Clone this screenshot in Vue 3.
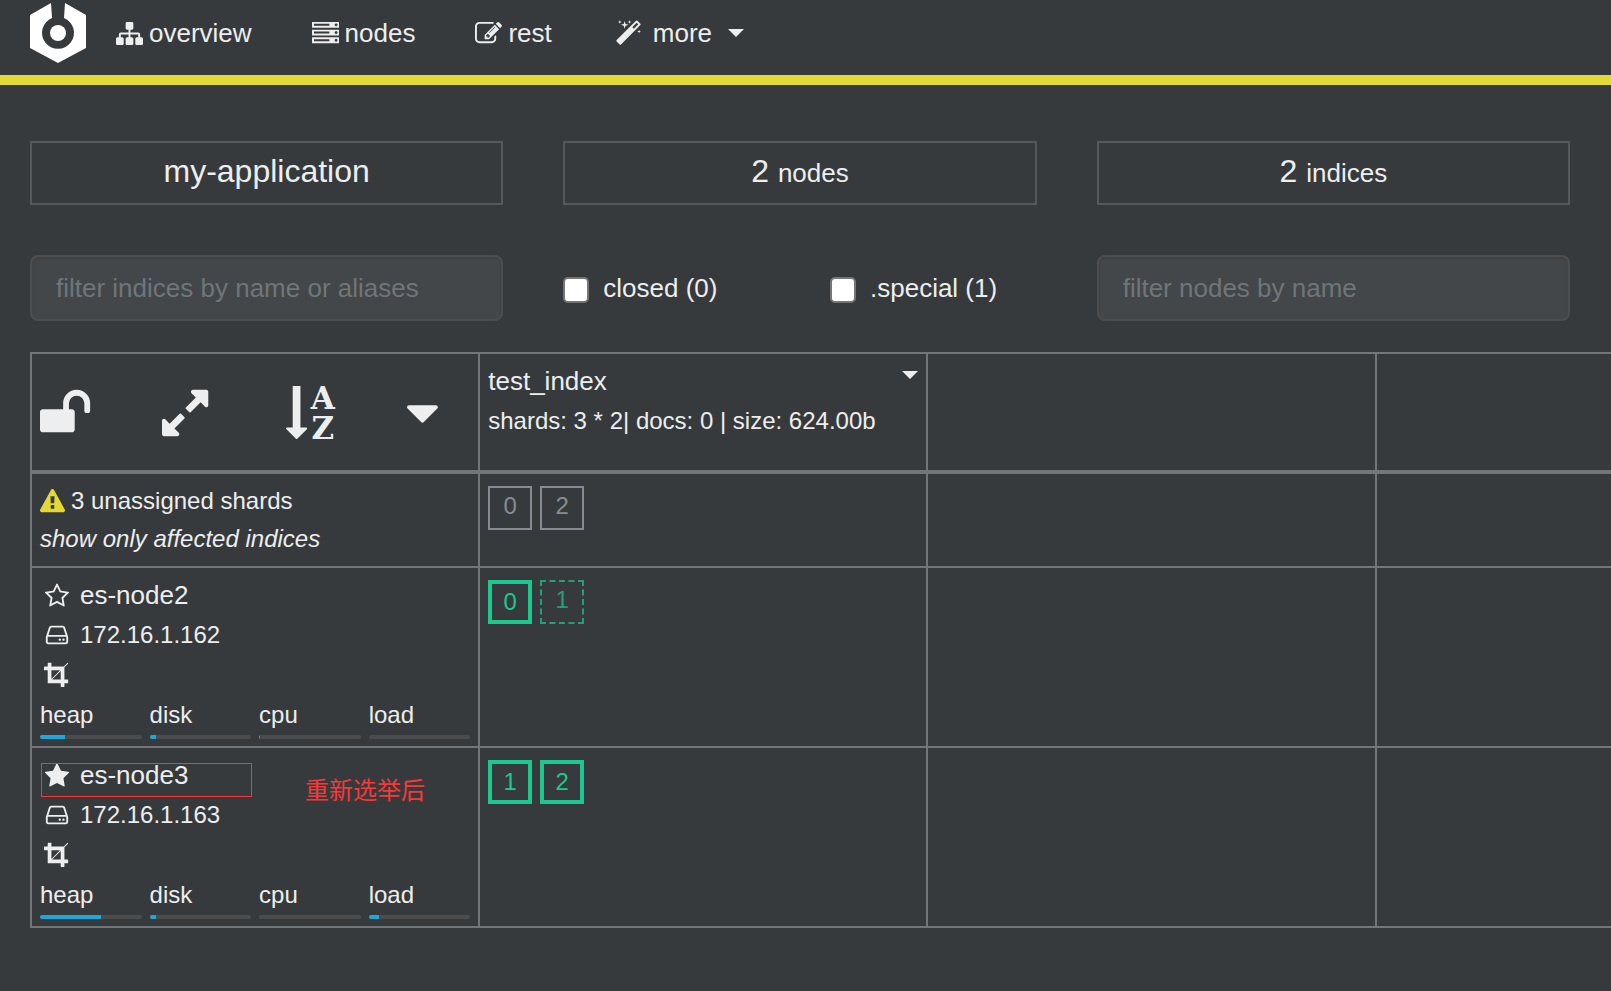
<script setup>
import { ref } from 'vue'

const icons = {
  sitemap: 'M1792 1248v320q0 40-28 68t-68 28h-320q-40 0-68-28t-28-68v-320q0-40 28-68t68-28h96v-192h-512v192h96q40 0 68 28t28 68v320q0 40-28 68t-68 28h-320q-40 0-68-28t-28-68v-320q0-40 28-68t68-28h96v-192h-512v192h96q40 0 68 28t28 68v320q0 40-28 68t-68 28h-320q-40 0-68-28t-28-68v-320q0-40 28-68t68-28h96v-192q0-52 38-90t90-38h512v-192h-96q-40 0-68-28t-28-68v-320q0-40 28-68t68-28h320q40 0 68 28t28 68v320q0 40-28 68t-68 28h-96v192h512q52 0 90 38t38 90v192h96q40 0 68 28t28 68z',
  server: 'M128 1408h1024v-128h-1024v128zm0-512h1024v-128h-1024v128zm1568 448q0-40-28-68t-68-28-68 28-28 68 28 68 68 28 68-28 28-68zm-1568-960h1024v-128h-1024v128zm1568 448q0-40-28-68t-68-28-68 28-28 68 28 68 68 28 68-28 28-68zm0-512q0-40-28-68t-68-28-68 28-28 68 28 68 68 28 68-28 28-68zm96 832v384h-1792v-384h1792zm0-512v384h-1792v-384h1792zm0-512v384h-1792v-384h1792z',
  edit: 'M888 1184l116-116-152-152-116 116v56h96v96h56zm440-720q-16-16-33 1l-350 350q-17 17-1 33t33-1l350-350q17-17 1-33zm80 594v190q0 119-84.5 203.5t-203.5 84.5h-832q-119 0-203.5-84.5t-84.5-203.5v-832q0-119 84.5-203.5t203.5-84.5h832q63 0 117 25 15 7 18 23 3 17-9 29l-49 49q-14 14-32 8-23-6-45-6h-832q-66 0-113 47t-47 113v832q0 66 47 113t113 47h832q66 0 113-47t47-113v-126q0-13 9-22l64-64q15-15 35-7t20 29zm-96-738l288 288-672 672h-288v-288zm444 132l-92 92-288-288 92-92q28-28 68-28t68 28l152 152q28 28 28 68t-28 68z',
  magic: 'M1254 581l293-293-107-107-293 293zm447-293q0 27-18 45l-1286 1286q-18 18-45 18t-45-18l-198-198q-18-18-18-45t18-45l1286-1286q18-18 45-18t45 18l198 198q18 18 18 45zm-1351-190l98 30-98 30-30 98-30-98-98-30 98-30 30-98zm350 162l196 60-196 60-60 196-60-196-196-60 196-60 60-196zm930 478l98 30-98 30-30 98-30-98-98-30 98-30 30-98zm-640-640l98 30-98 30-30 98-30-98-98-30 98-30 30-98z',
  unlock: 'M1728 576v256q0 26-19 45t-45 19h-64q-26 0-45-19t-19-45v-256q0-106-75-181t-181-75-181 75-75 181v192h96q40 0 68 28t28 68v576q0 40-28 68t-68 28h-960q-40 0-68-28t-28-68v-576q0-40 28-68t68-28h672v-192q0-185 131.5-316.5t316.5-131.5 316.5 131.5 131.5 316.5z',
  expand: 'M883 1056q0 13-10 23l-332 332 144 144q19 19 19 45t-19 45-45 19h-448q-26 0-45-19t-19-45v-448q0-26 19-45t45-19 45 19l144 144 332-332q10-10 23-10t23 10l114 114q10 10 10 23zm781-864v448q0 26-19 45t-45 19-45-19l-144-144-332 332q-10 10-23 10t-23-10l-114-114q-10-10-10-23t10-23l332-332-144-144q-19-19-19-45t19-45 45-19h448q26 0 45 19t19 45z',
  sortArrow: 'M736 1408q0 12-10 24l-319 319q-10 9-23 9-12 0-23-9l-320-320q-15-16-7-35 8-20 30-20h192v-1376q0-14 9-23t23-9h192q14 0 23 9t9 23v1376h192q14 0 23 9t9 23z',
  caret: 'M1408 704q0 26-19 45l-448 448q-19 19-45 19t-45-19l-448-448q-19-19-19-45t19-45 45-19h896q26 0 45 19t19 45z',
  warning: 'M1024 1375v-190q0-14-9.5-23.5t-22.5-9.5h-192q-13 0-22.5 9.5t-9.5 23.5v190q0 14 9.5 23.5t22.5 9.5h192q13 0 22.5-9.5t9.5-23.5zm-2-374l18-459q0-12-10-19-13-11-24-11h-220q-11 0-24 11-10 7-10 21l17 457q0 10 10 16.5t24 6.5h185q14 0 23.5-6.5t10.5-16.5zm-14-934l768 1408q35 63-2 126-17 29-46.5 46t-63.5 17h-1536q-34 0-63.5-17t-46.5-46q-37-63-2-126l768-1408q17-31 47-49t65-18 65 18 47 49z',
  star: 'M1728 647q0 22-26 48l-363 354 86 500q1 7 1 20 0 21-10.5 35.5t-30.5 14.5q-19 0-40-12l-449-236-449 236q-22 12-40 12-21 0-31.5-14.5t-10.5-35.5q0-6 2-20l86-500-364-354q-25-27-25-48 0-37 56-46l502-73 225-455q19-41 49-41t49 41l225 455 502 73q56 9 56 46z',
  starOutline: 'M1201 1004l306-297-422-62-189-382-189 382-422 62 306 297-73 421 378-199 377 199zm527-357q0 22-26 48l-363 354 86 500q1 7 1 20 0 50-41 50-19 0-40-12l-449-236-449 236q-22 12-40 12-21 0-31.5-14.5t-10.5-35.5q0-6 2-20l86-500-364-354q-25-27-25-48 0-37 56-46l502-73 225-455q19-41 49-41t49 41l225 455 502 73q56 9 56 46z',
  disk: 'M1168 1216q0 33-23.5 56.5t-56.5 23.5-56.5-23.5-23.5-56.5 23.5-56.5 56.5-23.5 56.5 23.5 23.5 56.5zm256 0q0 33-23.5 56.5t-56.5 23.5-56.5-23.5-23.5-56.5 23.5-56.5 56.5-23.5 56.5 23.5 23.5 56.5zm112 160v-320q0-13-9.5-22.5t-22.5-9.5h-1216q-13 0-22.5 9.5t-9.5 22.5v320q0 13 9.5 22.5t22.5 9.5h1216q13 0 22.5-9.5t9.5-22.5zm-1230-480h1180l-157-482q-4-13-16-21.5t-26-8.5h-782q-14 0-26 8.5t-16 21.5zm1358 160v320q0 66-47 113t-113 47h-1216q-66 0-113-47t-47-113v-320q0-25 16-75l197-606q17-53 63-86t101-33h782q55 0 101 33t63 86l197 606q16 50 16 75z',
  crop: 'M557 1280h595v-595zm-45-45l595-595h-595v595zm1152 77v192q0 14-9 23t-23 9h-224v224q0 14-9 23t-23 9h-192q-14 0-23-9t-9-23v-224h-864q-14 0-23-9t-9-23v-864h-224q-14 0-23-9t-9-23v-192q0-14 9-23t23-9h224v-224q0-14 9-23t23-9h192q14 0 23 9t9 23v224h851l246-247q10-9 23-9t23 9q9 10 9 23t-9 23l-247 246v851h224q14 0 23 9t9 23z'
}

const links = [
  { label: 'overview', icon: icons.sitemap },
  { label: 'nodes', icon: icons.server },
  { label: 'rest', icon: icons.edit }
]

const indexFilter = ref('')
const nodeFilter = ref('')
const showClosed = ref(false)
const showSpecial = ref(false)

const nodes = [
  {
    name: 'es-node2',
    ip: '172.16.1.162',
    master: false,
    stats: [['heap', 25], ['disk', 6], ['cpu', 1], ['load', 0]],
    shards: [{ id: 0, kind: 'primary' }, { id: 1, kind: 'replica' }]
  },
  {
    name: 'es-node3',
    ip: '172.16.1.163',
    master: true,
    note: '重新选举后',
    stats: [['heap', 60], ['disk', 6], ['cpu', 0], ['load', 10]],
    shards: [{ id: 1, kind: 'primary' }, { id: 2, kind: 'primary' }]
  }
]
</script>

<template>
  <div class="page">
    <header class="navbar">
      <a class="logo" href="#" aria-label="cerebro">
        <svg viewBox="0 0 56 60">
          <path class="logo-body" d="M21 0L0 12V45L28 60L56 45V12L35 0L34 15A16 16 0 1 1 22 15Z" />
          <circle class="logo-body" cx="28" cy="30" r="8" />
        </svg>
      </a>
      <nav class="links">
        <a v-for="l in links" :key="l.label" href="#" class="nav-item">
          <svg class="nav-icon" viewBox="0 0 1792 1792"><path :d="l.icon" /></svg>
          <span>{{ l.label }}</span>
        </a>
        <button type="button" class="nav-item more">
          <span class="icon-slot"><svg class="nav-icon" viewBox="0 0 1792 1792"><path :d="icons.magic" /></svg></span>
          <span>more</span>
          <span class="caret more-caret"></span>
        </button>
      </nav>
    </header>

    <main>
      <section class="thirds summary">
        <div class="stat">my-application</div>
        <div class="stat">2 <small>nodes</small></div>
        <div class="stat">2 <small>indices</small></div>
      </section>

      <section class="thirds filters">
        <input v-model="indexFilter" class="field" type="text" aria-label="filter indices" placeholder="filter indices by name or aliases">
        <div class="checks">
          <label><input v-model="showClosed" type="checkbox"><span>closed (0)</span></label>
          <label><input v-model="showSpecial" type="checkbox"><span>.special (1)</span></label>
        </div>
        <input v-model="nodeFilter" class="field" type="text" aria-label="filter nodes" placeholder="filter nodes by name">
      </section>

      <table class="shard-table">
        <colgroup>
          <col class="col"><col class="col"><col class="col"><col>
        </colgroup>
        <thead>
          <tr>
            <th>
              <div class="tools">
                <button type="button" aria-label="lock shard allocation">
                  <svg class="tool-icon" viewBox="64 0 1792 1792"><path :d="icons.unlock" /></svg>
                </button>
                <button type="button" aria-label="expand view">
                  <svg class="tool-icon" viewBox="128 0 1792 1792"><path :d="icons.expand" /></svg>
                </button>
                <button type="button" class="sort" aria-label="sort by name">
                  <svg class="sort-arrow" viewBox="0 0 763 1792"><path :d="icons.sortArrow" /></svg>
                  <span class="sort-letters">A Z</span>
                </button>
                <button type="button" aria-label="more actions">
                  <svg class="tool-icon" viewBox="384 0 1792 1792"><path :d="icons.caret" /></svg>
                </button>
              </div>
            </th>
            <th>
              <div class="index-head">
                <div class="lines">
                  <a href="#" class="name">test_index</a>
                  <span>shards: 3 * 2| docs: 0 | size: 624.00b</span>
                </div>
                <button type="button" class="index-menu" aria-label="index actions"><span class="caret"></span></button>
              </div>
            </th>
            <th></th>
            <th></th>
          </tr>
        </thead>
        <tbody>
          <tr>
            <td class="unassigned">
              <div class="lines">
                <span class="alert"><svg class="alert-icon" viewBox="0 0 1792 1792"><path :d="icons.warning" /></svg>3 unassigned shards</span>
                <a href="#" class="affected">show only affected indices</a>
              </div>
            </td>
            <td>
              <div class="shards">
                <span class="shard">0</span>
                <span class="shard">2</span>
              </div>
            </td>
            <td></td>
            <td></td>
          </tr>
          <tr v-for="n in nodes" :key="n.name">
            <td class="node">
              <div class="lines">
                <div class="node-line name">
                  <span class="icon-slot"><svg class="node-icon" viewBox="0 0 1792 1792"><path :d="n.master ? icons.star : icons.starOutline" /></svg></span>
                  <a href="#">{{ n.name }}</a>
                </div>
                <div class="node-line">
                  <span class="icon-slot"><svg class="node-icon" viewBox="0 0 1792 1792"><path :d="icons.disk" /></svg></span>
                  <span>{{ n.ip }}</span>
                </div>
                <div class="node-line roles">
                  <span class="icon-slot"><svg class="node-icon" viewBox="0 0 1792 1792"><path :d="icons.crop" /></svg></span>
                </div>
                <div class="meters">
                  <div v-for="[label, value] in n.stats" :key="label" class="meter">
                    <span>{{ label }}</span>
                    <div class="track"><div class="fill" :style="{ width: value + '%' }"></div></div>
                  </div>
                </div>
              </div>
              <template v-if="n.note">
                <div class="mark"></div>
                <div class="note">{{ n.note }}</div>
              </template>
            </td>
            <td>
              <div class="shards">
                <span v-for="s in n.shards" :key="s.id" class="shard" :class="s.kind">{{ s.id }}</span>
              </div>
            </td>
            <td></td>
            <td></td>
          </tr>
        </tbody>
      </table>
    </main>
  </div>
</template>

<style>
html,
body {
  background: #373a3c;
}
</style>

<style scoped>
.page {
  color: #eceeef;
  font-family: "Liberation Sans", Arial, "Noto Sans CJK SC", sans-serif;
  font-size: 24px;
  line-height: 34px;
  overflow-x: hidden;
}
* {
  box-sizing: border-box;
}
a,
button {
  color: inherit;
  text-decoration: none;
}
button {
  font: inherit;
  padding: 0;
  border: 0;
  background: none;
  cursor: pointer;
}
svg {
  display: block;
  fill: currentColor;
}

.navbar {
  display: flex;
  align-items: center;
  gap: 30px;
  padding: 3px 30px 12px;
  border-bottom: 10px solid #e4d836;
}
.logo svg {
  width: 56px;
  height: 60px;
}
.logo-body {
  fill: #fff;
}
.links {
  display: flex;
  gap: 60px;
  font-size: 26px;
  line-height: 37px;
}
.nav-item {
  display: flex;
  align-items: center;
  gap: 6px;
}
.more {
  gap: 8px;
}
.nav-icon {
  width: 27px;
  height: 27px;
}
.icon-slot {
  display: flex;
  justify-content: center;
  width: 33px;
}
.caret {
  display: block;
  border: 8px solid transparent;
  border-top-color: #eceeef;
  border-bottom: 0;
}
.more-caret {
  margin-left: 8px;
}

main {
  padding-left: 30px;
}
.thirds {
  display: grid;
  grid-template-columns: repeat(3, 1fr);
  gap: 60px;
  margin-right: 41px;
}
.summary {
  margin-top: 56px;
}
.stat {
  padding: 5px 0 9px;
  border: 2px solid #55595c;
  font-size: 32px;
  line-height: 46px;
  height: 64px;
  text-align: center;
}
.stat small {
  font-size: 26px;
}
.filters {
  margin-top: 50px;
  font-size: 26px;
  line-height: 37px;
}
.field {
  width: 100%;
  height: 66px;
  padding: 0 24px;
  border: 2px solid #4b4d4f;
  border-radius: 8px;
  background: #434749;
  box-shadow: inset 0 2px 2px rgba(0, 0, 0, 0.075);
  color: #eceeef;
  font: inherit;
}
.field::placeholder {
  color: #6f767a;
  opacity: 1;
}
.checks {
  display: grid;
  grid-template-columns: 1fr 1fr;
  gap: 60px;
  align-items: center;
}
.checks label {
  display: flex;
  align-items: center;
  gap: 14px;
  white-space: nowrap;
}
.checks input {
  appearance: none;
  width: 26px;
  height: 26px;
  margin: 4px 0 0;
  border: 2px solid #767676;
  border-radius: 5px;
  background: #fff;
}
.checks input:checked {
  background: #1ca8dd;
}

.shard-table {
  width: 100%;
  margin-top: 31px;
  border-collapse: collapse;
  table-layout: fixed;
}
.col {
  width: 28.37%;
}
th,
td {
  position: relative;
  padding: 9px 8px 7px;
  border: 2px solid #727678;
  font-weight: normal;
  text-align: left;
  vertical-align: top;
}
th:last-child,
td:last-child {
  border-right: 0;
}
th {
  border-bottom-width: 4px;
}
.tools {
  display: grid;
  grid-template-columns: 2fr 2fr 2fr 1fr;
  padding: 23px 2px 23px 0;
}
.tool-icon {
  width: 54px;
  height: 54px;
  overflow: visible;
}
.sort {
  display: flex;
  align-items: center;
  gap: 2px;
  height: 54px;
}
.sort-arrow {
  width: 23px;
  height: 54px;
}
.sort-letters {
  width: 26px;
  font-family: "DejaVu Serif", serif;
  font-size: 31px;
  font-weight: bold;
  line-height: 30px;
  text-align: center;
}
.index-head {
  display: flex;
  justify-content: space-between;
  align-items: flex-start;
}
.index-menu {
  padding-top: 8px;
}
.lines {
  display: flex;
  flex-direction: column;
  gap: 4px;
}
.name {
  font-size: 26px;
  line-height: 37px;
}
.unassigned {
  padding-top: 10px;
  padding-bottom: 10px;
}
.alert {
  display: flex;
  align-items: center;
  gap: 6px;
}
.alert-icon {
  width: 25px;
  height: 25px;
  fill: #e4d836;
}
.affected {
  font-style: italic;
}
.node-line {
  display: flex;
  align-items: center;
  gap: 7px;
}
.node-icon {
  width: 26px;
  height: 26px;
}
.roles {
  height: 35px;
}
.meters {
  display: grid;
  grid-template-columns: repeat(4, 1fr);
  gap: 8px;
  padding-top: 3px;
}
.meter {
  display: flex;
  flex-direction: column;
  gap: 3px;
}
.track {
  height: 4px;
  border-radius: 2px;
  background: #4b4c4e;
  overflow: hidden;
}
.fill {
  height: 100%;
  background: #1ca8dd;
}
.shards {
  display: flex;
  gap: 8px;
  padding-top: 3px;
}
.shard {
  width: 44px;
  height: 44px;
  border: 2px solid #888c92;
  color: #888c92;
  line-height: 36px;
  text-align: center;
}
.shard.primary {
  border: 4px solid #1bc98e;
  color: #1bc98e;
}
.shard.replica {
  border: 2px dashed #1bc98e;
  color: #1bc98e;
  opacity: 0.7;
}
.mark {
  position: absolute;
  top: 15px;
  left: 9px;
  width: 211px;
  height: 34px;
  border: 1px solid #f93838;
  pointer-events: none;
}
.note {
  position: absolute;
  top: 26px;
  left: 273px;
  color: #f93838;
}
</style>
